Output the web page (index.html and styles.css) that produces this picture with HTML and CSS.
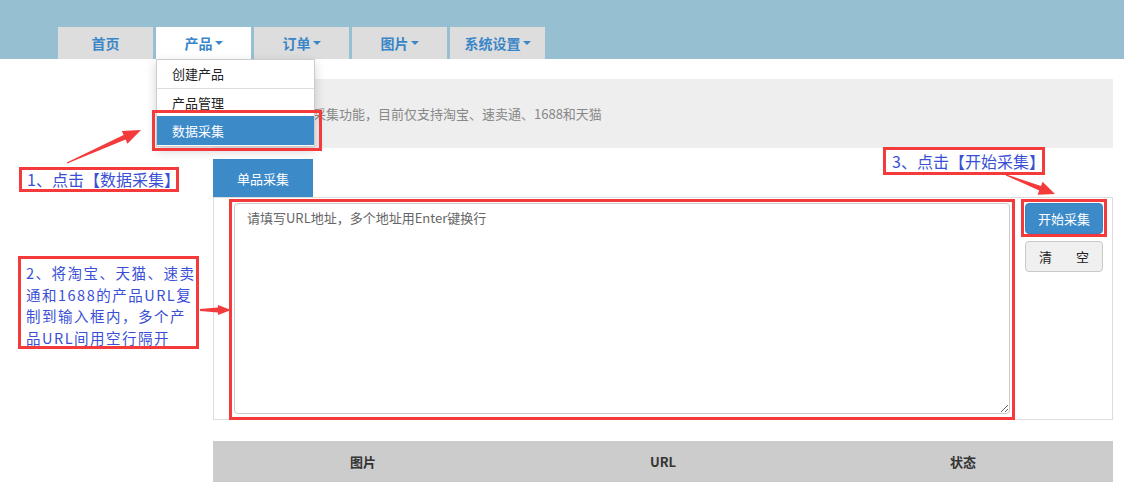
FILE: index.html
```html
<!DOCTYPE html>
<html lang="zh">
<head>
<meta charset="utf-8">
<link rel="stylesheet" href="styles.css">
</head>
<body>
<div class="header">
  <div class="nav-tab">首页</div>
  <div class="nav-tab active">产品<span class="caret"></span>
    <div class="dropdown">
      <div class="dd-item">创建产品</div>
      <div class="dd-item">产品管理</div>
      <div class="dd-item selected">数据采集</div>
    </div>
  </div>
  <div class="nav-tab">订单<span class="caret"></span></div>
  <div class="nav-tab">图片<span class="caret"></span></div>
  <div class="nav-tab">系统设置<span class="caret"></span></div>
</div>

<div class="main">
  <div class="banner">欢迎使用数据采集功能，目前仅支持淘宝、速卖通、1688和天猫</div>
  <div class="tabs">
    <div class="tab-item">单品采集</div>
  </div>
  <div class="panel">
    <textarea class="url-input" placeholder="请填写URL地址，多个地址用Enter键换行"></textarea>
    <div class="actions">
      <button class="btn btn-primary">开始采集</button>
      <button class="btn btn-default"><span>清</span><span>空</span></button>
    </div>
  </div>
  <div class="table-head">
    <div>图片</div>
    <div>URL</div>
    <div>状态</div>
  </div>
</div>

<div class="note note1">1、点击【数据采集】</div>
<div class="note note2">
  <div class="note-line">2、将淘宝、天猫、速卖</div>
  <div class="note-line">通和1688的产品URL复</div>
  <div class="note-line">制到输入框内，多个产</div>
  <div class="note-line">品URL间用空行隔开</div>
</div>
<div class="note note3">3、点击【开始采集】</div>
<div class="mark mark-menu"></div>
<div class="mark mark-text"></div>
<div class="mark mark-btn"></div>

<svg class="arrows" width="1124" height="503" viewBox="0 0 1124 503">
  <polygon fill="#f43a3a" points="66.8,162.5 123.6,135.0 121.8,130.9 141,130 127.4,143.7 125.6,139.6 67.2,163.5"/>
  <polygon fill="#f43a3a" points="200,309 218,307.5 218,305 231,310 218,315 218,312.5 200,311"/>
  <polygon fill="#f43a3a" points="1006.2,174.5 1041.0,185.9 1042.6,181.7 1055,194 1037.6,194.7 1039.2,190.5 1005.8,175.5"/>
</svg>
</body>
</html>
```
FILE: styles.css
```css
* { box-sizing: border-box; }
body {
  margin: 0;
  position: relative;
  width: 1124px;
  height: 503px;
  overflow: hidden;
  background: #fff;
  font-family: "Noto Sans CJK SC", "Liberation Sans", sans-serif;
  font-size: 13px;
  color: #333;
}
.header {
  height: 59px;
  background: #96c0d2;
  display: flex;
  align-items: flex-end;
  padding-left: 58px;
}
.nav-tab {
  position: relative;
  width: 95px;
  height: 32px;
  margin-right: 3px;
  background: #dddddd;
  color: #3a86c8;
  font-weight: bold;
  font-size: 14px;
  display: flex;
  align-items: center;
  justify-content: center;
}
.nav-tab.active { background: #fff; }
.caret {
  display: inline-block;
  width: 0;
  height: 0;
  margin-left: 2px;
  border-left: 4px solid transparent;
  border-right: 4px solid transparent;
  border-top: 4px solid #3a86c8;
}
.dropdown {
  position: absolute;
  top: 32px;
  left: 0;
  width: 159px;
  background: #fff;
  border: 1px solid #ccc;
  box-shadow: 0 4px 10px rgba(0,0,0,0.18);
  z-index: 5;
  font-weight: normal;
  padding-bottom: 1px;
}
.dd-item {
  height: 28px;
  line-height: 27px;
  padding-left: 15px;
  font-size: 13px;
  color: #222;
}
.dd-item + .dd-item { border-top: 1px solid #ddd; }
.dd-item.selected {
  background: #3d8ac9;
  color: #fff;
  border-top: none;
  height: 29px;
  line-height: 29px;
}
.main {
  margin-left: 213px;
  width: 900px;
  padding-top: 20px;
}
.banner {
  height: 69px;
  background: #eeeeee;
  padding-left: 22px;
  display: flex;
  align-items: center;
  color: #888;
  font-size: 13px;
}
.tabs {
  margin-top: 11px;
  display: flex;
}
.tab-item {
  width: 100px;
  height: 38px;
  background: #3d8ac9;
  color: #fff;
  display: flex;
  align-items: center;
  justify-content: center;
  font-size: 13px;
}
.panel {
  height: 223px;
  border: 1px solid #dddddd;
  padding: 5px 9px 0 20px;
  display: flex;
  align-items: flex-start;
}
.url-input {
  width: 776px;
  height: 211px;
  border: 1px solid #cccccc;
  border-radius: 4px;
  padding: 4px 12px;
  font-family: "Noto Sans CJK SC", "Liberation Sans", sans-serif;
  font-size: 13px;
  line-height: 20px;
  resize: vertical;
  outline: none;
  margin: 0;
}
.url-input::placeholder { color: #666; }
.actions {
  margin-left: 15px;
  display: flex;
  flex-direction: column;
  gap: 7px;
}
.btn {
  width: 78px;
  height: 31px;
  border-radius: 4px;
  font-family: "Noto Sans CJK SC", "Liberation Sans", sans-serif;
  font-size: 13px;
  margin: 0;
  padding: 0;
}
.btn-primary {
  background: #3d8ac9;
  border: 1px solid #3a80bd;
  color: #fff;
}
.btn-default {
  background: #f0f0f0;
  border: 1px solid #c8c8c8;
  color: #222;
  display: flex;
  align-items: center;
  justify-content: space-between;
  padding: 0 13px 0 13px;
}
.table-head {
  margin-top: 21px;
  height: 41px;
  background: #cccccc;
  display: grid;
  grid-template-columns: 1fr 1fr 1fr;
  align-items: center;
  text-align: center;
  font-weight: bold;
  color: #333;
  font-size: 13px;
}
.note {
  position: absolute;
  border: 3px solid #f43a3a;
  background: #fff;
  color: #3a4fd6;
  font-size: 16px;
  line-height: 19px;
  padding: 0 0 0 5px;
  white-space: nowrap;
}
.note1 { left: 19px; top: 167px; width: 160px; height: 25px; }
.note2 {
  left: 18px; top: 256px; width: 181px; height: 93px;
  padding-top: 3px; padding-left: 5px;
  font-size: 14.5px;
  letter-spacing: 1.5px;
}
.note-line {
  height: 21.5px;
  line-height: 21.5px;
}
.note3 { left: 883px; top: 147px; width: 162px; height: 28px; padding-top: 2px; padding-left: 6px; }
.mark {
  position: absolute;
  border: 3px solid #f43a3a;
  z-index: 6;
}
.mark-menu { left: 152px; top: 110px; width: 170px; height: 41px; }
.mark-text { left: 229px; top: 199px; width: 786px; height: 221px; }
.mark-btn { left: 1021px; top: 199px; width: 86px; height: 38px; }
.arrows {
  position: absolute;
  left: 0;
  top: 0;
  z-index: 7;
  pointer-events: none;
}
```
